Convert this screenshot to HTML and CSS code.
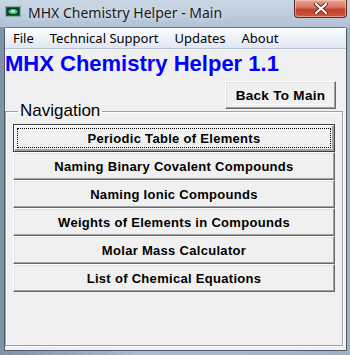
FILE: index.html
```html
<!DOCTYPE html>
<html lang="en">
<head>
    <meta charset="UTF-8">
    <title>MHX Chemistry Helper - Main</title>
    <link rel="stylesheet" href="styles.css">
</head>
<body>
    <div class="window">
        <div class="titlebar">
            <svg class="app-icon" width="16" height="11" viewBox="0 0 16 11">
                <rect x="0.5" y="0.5" width="15" height="10" fill="#2f5a5a" stroke="#8fa9a9"/>
                <rect x="2" y="2" width="12" height="7" fill="#0d3a2c"/>
                <ellipse cx="8" cy="5.5" rx="4.5" ry="2.6" fill="#35d06a"/>
                <ellipse cx="8" cy="5.2" rx="2.2" ry="1.2" fill="#a6f7b6"/>
            </svg>
            <span class="title">MHX Chemistry Helper - Main</span>
            <div class="close-btn">
                <svg width="14" height="11" viewBox="0 0 14 11">
                    <path d="M2 1 L12 10 M12 1 L2 10" stroke="#5a2a22" stroke-width="4" stroke-linecap="round"/>
                    <path d="M2 1 L12 10 M12 1 L2 10" stroke="#ffffff" stroke-width="2.2" stroke-linecap="round"/>
                </svg>
            </div>
        </div>
        <div class="client">
            <div class="menubar">
                <span class="menu-item">File</span>
                <span class="menu-item">Technical Support</span>
                <span class="menu-item">Updates</span>
                <span class="menu-item">About</span>
            </div>
            <h1 class="app-title">MHX Chemistry Helper 1.1</h1>
            <div class="top-row">
                <button class="btn back-btn">Back To Main</button>
            </div>
            <fieldset class="nav">
                <legend>Navigation</legend>
                <button class="btn nav-btn focused">Periodic Table of Elements</button>
                <button class="btn nav-btn">Naming Binary Covalent Compounds</button>
                <button class="btn nav-btn">Naming Ionic Compounds</button>
                <button class="btn nav-btn">Weights of Elements in Compounds</button>
                <button class="btn nav-btn">Molar Mass Calculator</button>
                <button class="btn nav-btn">List of Chemical Equations</button>
            </fieldset>
        </div>
    </div>
</body>
</html>
```

FILE: styles.css
```css
body {
    margin: 0;
    padding: 0;
    background-color: #9fb3c8;
}
.window {
    width: 350px;
    height: 355px;
    box-sizing: border-box;
    display: flex;
    flex-direction: column;
    padding: 0 3px 4px 4px;
    background: linear-gradient(90deg, #7f91a6 0%, #a9bbcf 40%, #9fb1c5 100%);
    overflow: hidden;
}
.titlebar {
    height: 27px;
    flex: none;
    display: flex;
    align-items: flex-start;
    margin: 0 -3px 0 -4px;
    padding: 0 3px 0 5px;
    background: linear-gradient(180deg, #c9d6e4 0%, #bccbdc 60%, #b0c1d4 100%);
}
.app-icon {
    margin-top: 6px;
    flex: none;
}
.title {
    margin-left: 7px;
    margin-top: 3px;
    font-family: "Noto Sans", sans-serif;
    font-size: 14px;
    line-height: 20px;
    color: #1b1b1b;
    text-shadow: 0 0 6px rgba(255, 255, 255, 0.8);
}
.close-btn {
    margin-left: auto;
    width: 53px;
    height: 18px;
    box-sizing: border-box;
    border: 1px solid #5c2a24;
    border-top: none;
    border-radius: 0 0 4px 4px;
    background: linear-gradient(180deg, #e7a28f 0%, #d7715c 45%, #c2412c 55%, #d0573c 100%);
    box-shadow: inset 0 0 0 1px rgba(255, 220, 210, 0.5);
    display: flex;
    justify-content: center;
    align-items: center;
}
.client {
    flex: 1;
    display: flex;
    flex-direction: column;
    background-color: #f0f0f0;
    border: 1px solid #4d5b6b;
    border-top-color: #6b7888;
    border-radius: 3px 3px 0 0;
}
.menubar {
    height: 20px;
    flex: none;
    display: flex;
    align-items: center;
    padding-left: 0;
    background: linear-gradient(180deg, #fbfcfe 0%, #eef2f8 50%, #dfe7f2 100%);
    border-bottom: 1px solid #b6c3d3;
    font-family: "Noto Sans", sans-serif;
    font-size: 13px;
    color: #000;
}
.menu-item {
    padding: 0 8px;
}
.app-title {
    margin: 2px 0 0 0;
    font-family: "Liberation Sans", Arial, sans-serif;
    font-weight: bold;
    font-size: 22px;
    line-height: 26px;
    color: #0000ff;
}
.top-row {
    display: flex;
    justify-content: flex-end;
    margin-top: 4px;
    padding-right: 10px;
}
.btn {
    position: relative;
    font-family: "Liberation Sans", Arial, sans-serif;
    font-weight: bold;
    font-size: 13px;
    letter-spacing: 0.3px;
    color: #000;
    background-color: #f0f0f0;
    border: 1px solid;
    border-color: #ffffff #696969 #696969 #ffffff;
    box-shadow: inset -1px -1px 0 #a0a0a0, inset 1px 1px 0 #e3e3e3;
    padding: 0;
    cursor: pointer;
}
.back-btn {
    width: 111px;
    height: 28px;
    font-size: 13.5px;
}
.nav {
    flex: 1;
    margin: -8px 3px 4px 0;
    padding: 3px 7px 0 7px;
    border: 1px solid #a0a0a0;
    box-shadow: inset 1px 1px 0 #ffffff, 1px 1px 0 #ffffff;
    display: flex;
    flex-direction: column;
}
.nav legend {
    margin-left: 5px;
    padding: 0 2px;
    font-family: "Liberation Sans", Arial, sans-serif;
    font-size: 17px;
    line-height: 20px;
    color: #000;
}
.nav-btn {
    height: 28px;
    width: 100%;
    flex: none;
}
.focused {
    border-color: #404040;
    box-shadow: inset 1px 1px 0 #ffffff, inset -2px -2px 0 #a0a0a0;
}
.focused::after {
    content: "";
    position: absolute;
    left: 3px;
    right: 3px;
    top: 3px;
    bottom: 3px;
    border: 1px dotted #000;
}
```
